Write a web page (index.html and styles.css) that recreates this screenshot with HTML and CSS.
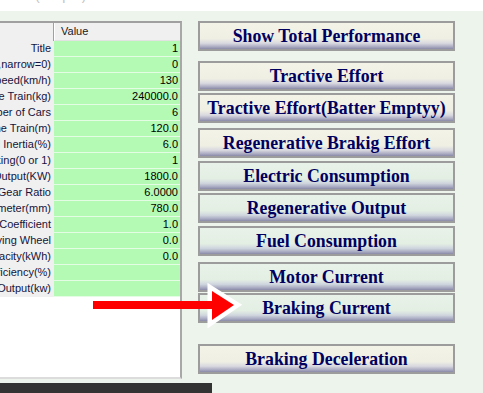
FILE: index.html
```html
<!DOCTYPE html>
<html lang="en">
  <head>
    <meta charset="utf-8">
    <title>Performance</title>
    <meta name="viewport" content="width=device-width, initial-scale=1">
    <link rel="stylesheet" href="styles.css">
  </head>
  <body>
    <div class="topband"><span class="caption">(Output)</span></div>
    <div class="main">
      <div class="grid">
        <div class="row head"><div class="lbl"></div><div class="val">Value</div></div>
        <div class="row"><div class="lbl"><span>Title</span></div><div class="val">1</div></div>
        <div class="row"><div class="lbl"><span>Gauge(wide=1,narrow=0)</span></div><div class="val">0</div></div>
        <div class="row"><div class="lbl"><span>Max Speed(km/h)</span></div><div class="val">130</div></div>
        <div class="row"><div class="lbl"><span>Weight of the Train(kg)</span></div><div class="val">240000.0</div></div>
        <div class="row"><div class="lbl"><span>Number of Cars</span></div><div class="val">6</div></div>
        <div class="row"><div class="lbl"><span>Length of the Train(m)</span></div><div class="val">120.0</div></div>
        <div class="row"><div class="lbl"><span>Rotational Inertia(%)</span></div><div class="val">6.0</div></div>
        <div class="row"><div class="lbl"><span>Regenerative Braking(0 or 1)</span></div><div class="val">1</div></div>
        <div class="row"><div class="lbl"><span>Motor Output(KW)</span></div><div class="val">1800.0</div></div>
        <div class="row"><div class="lbl"><span>Gear Ratio</span></div><div class="val">6.0000</div></div>
        <div class="row"><div class="lbl"><span>Wheel Diameter(mm)</span></div><div class="val">780.0</div></div>
        <div class="row"><div class="lbl"><span>Adhesion Coefficient</span></div><div class="val">1.0</div></div>
        <div class="row"><div class="lbl"><span>Number of Driving Wheel</span></div><div class="val">0.0</div></div>
        <div class="row"><div class="lbl"><span>Battery Capacity(kWh)</span></div><div class="val">0.0</div></div>
        <div class="row"><div class="lbl"><span>Motor Efficiency(%)</span></div><div class="val"></div></div>
        <div class="row"><div class="lbl"><span>Engine Output(kw)</span></div><div class="val"></div></div>
      </div>
      <div class="buttons">
        <button type="button" class="btn cream">Show Total Performance</button>
        <button type="button" class="btn cream mt10">Tractive Effort</button>
        <button type="button" class="btn cream mt2">Tractive Effort(Batter Emptyy)</button>
        <button type="button" class="btn cream mt5">Regenerative Brakig Effort</button>
        <button type="button" class="btn green mt3">Electric Consumption</button>
        <button type="button" class="btn green mt2">Regenerative Output</button>
        <button type="button" class="btn green mt3">Fuel Consumption</button>
        <button type="button" class="btn green mt6">Motor Current</button>
        <button type="button" class="btn green mt1">Braking Current</button>
        <button type="button" class="btn cream mt21">Braking Deceleration</button>
      </div>
    </div>
    <div class="bar"></div>
    <!-- pointer drawn over the grid and the buttons -->
    <svg class="arrow" width="160" height="50" viewBox="0 0 160 50">
      <polygon points="122,11 144,25 122,40" fill="#fff" stroke="#fff" stroke-width="9" stroke-linejoin="miter"/>
      <polygon points="122,11 144,25 122,40" fill="#ff0000"/>
      <rect x="3" y="21" width="122" height="8" fill="#ff0000"/>
    </svg>
  </body>
</html>
```

FILE: styles.css
```css
body {
  margin: 0;
  background-color: #ecf4ec;
  font-family: "Liberation Sans", Arial, sans-serif;
  overflow: hidden;
}
.topband {
  height: 11px;
  background-color: #fff;
  overflow: hidden;
}
.caption {
  display: block;
  margin-top: -12px;
  padding-left: 35px;
  font-size: 14px;
  line-height: 14px;
  color: #c4c4c4;
}
.main {
  display: flex;
  align-items: flex-start;
}
.grid {
  margin-top: 10px;
  width: 182px;
  height: 358px;
  box-sizing: border-box;
  background-color: #fff;
  border-top: 2px solid #a0a0a0;
  border-right: 2px solid #a8a8a8;
  border-bottom: 2px solid #dcdcdc;
  font-size: 11px;
}
.row {
  display: grid;
  grid-template-columns: 54px 126px;
  height: 16px;
  line-height: 15px;
}
.row .lbl {
  display: flex;
  justify-content: flex-end;
  overflow: hidden;
  white-space: nowrap;
  padding-right: 3px;
  background-color: #f0f0f0;
  color: #14143c;
}
.row .lbl span {
  flex-shrink: 0;
}
.row .val {
  text-align: right;
  padding-right: 2px;
  background-color: #b4fab4;
  border-bottom: 1px solid #e4fce4;
  color: #000;
}
.row.head {
  height: 18px;
  line-height: 17px;
}
.row.head .lbl {
  border-right: 1px solid #a0a0a0;
}
.row.head .val {
  text-align: left;
  padding-left: 6px;
  background-color: #f0f0f0;
  border-left: 1px solid #fff;
  border-bottom: 1px solid #e2e2e2;
  color: #1a1a1a;
}
.buttons {
  margin-top: 10px;
  margin-left: 16px;
  width: 257px;
  display: flex;
  flex-direction: column;
}
.btn {
  height: 30px;
  box-sizing: border-box;
  border: 2px solid #9c9c9c;
  padding: 0;
  font-family: "Liberation Serif", "Times New Roman", serif;
  font-weight: bold;
  font-size: 17.8px;
  line-height: 26px;
  color: #000060;
  text-align: center;
  white-space: nowrap;
}
.btn.cream {
  background: linear-gradient(#f4f3e7 0%, #f0efe4 60%, #d8d8e0 78%, #a8a8c0 92%, #8a8aa8 100%);
}
.btn.green {
  background: linear-gradient(#e8f2e8 0%, #e4efe4 60%, #d0d6de 78%, #a6a8c0 92%, #8a8aa8 100%);
}
.mt1 { margin-top: 1px; }
.mt2 { margin-top: 2px; }
.mt3 { margin-top: 3px; }
.mt5 { margin-top: 5px; }
.mt6 { margin-top: 6px; }
.mt10 { margin-top: 10px; }
.mt21 { margin-top: 21px; }
.bar {
  margin-top: 4px;
  width: 212px;
  height: 10px;
  background-color: #333;
}
.arrow {
  position: absolute;
  left: 90px;
  top: 280px;
}
```
